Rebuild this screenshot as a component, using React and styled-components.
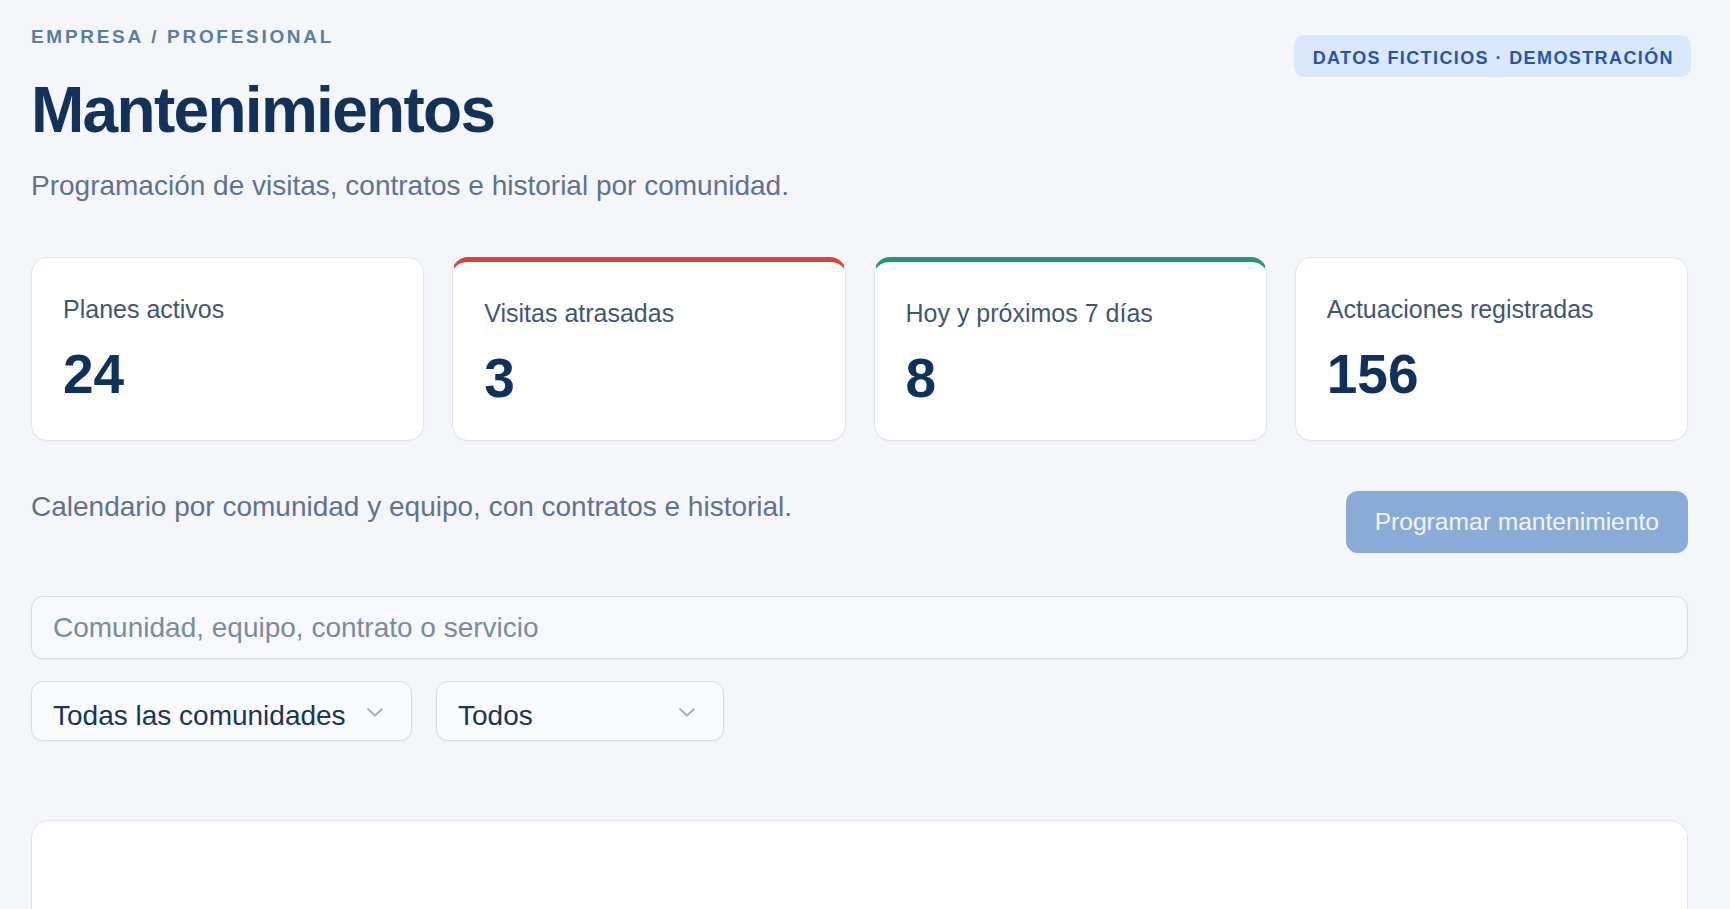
import React from "react";
import styled, { createGlobalStyle } from "styled-components";

const Global = createGlobalStyle`
  * { box-sizing: border-box; }
  html, body {
    margin: 0;
    padding: 0;
    height: 100%;
    overflow: hidden;
    background: #f4f6fa;
    font-family: "Liberation Sans", Arial, Helvetica, sans-serif;
  }
`;

const Page = styled.div`
  height: 100vh;
  overflow: hidden;
  padding: 26px 42px 0 31px;
`;

const Header = styled.header`
  display: flex;
  justify-content: space-between;
  align-items: flex-start;
`;

const Crumb = styled.div`
  font-size: 19px;
  line-height: 22px;
  font-weight: 700;
  letter-spacing: 2.7px;
  color: #5b7ea4;
  text-transform: uppercase;
`;

const Title = styled.h1`
  margin: 26px 0 0;
  font-size: 64px;
  line-height: 72px;
  font-weight: 700;
  letter-spacing: -1.7px;
  color: #12325a;
`;

const Lead = styled.p`
  margin: 22px 0 0;
  font-size: 28px;
  line-height: 36px;
  color: #5f7391;
`;

const Badge = styled.span`
  margin-top: 9px;
  margin-right: -3px;
  padding: 12px 17px 8px 19px;
  border-radius: 10px;
  background: #d9e8fb;
  color: #1f56b5;
  font-size: 18px;
  line-height: 22px;
  font-weight: 700;
  letter-spacing: 1.4px;
  white-space: nowrap;
`;

const Stats = styled.section`
  margin-top: 53px;
  display: grid;
  grid-template-columns: repeat(4, 1fr);
  gap: 28px;
`;

const Card = styled.div`
  background: #ffffff;
  border: 1px solid #dfe5ee;
  border-top: ${(p) => (p.$accent ? `5px solid ${p.$accent}` : "1px solid #dfe5ee")};
  border-radius: 16px;
  padding: 36px 31px ${(p) => (p.$accent ? "32px" : "36px")};
  box-shadow: 0 1px 2px rgba(20, 40, 80, 0.03);
`;

const Label = styled.div`
  font-size: 25px;
  line-height: 30px;
  color: #3f5674;
`;

const Value = styled.div`
  margin-top: 20px;
  font-size: 55px;
  line-height: 60px;
  font-weight: 700;
  color: #10325a;
`;

const Toolbar = styled.div`
  margin-top: 48px;
  display: flex;
  justify-content: space-between;
  align-items: flex-start;
`;

const Hint = styled.p`
  margin: 0;
  font-size: 28px;
  line-height: 36px;
  color: #5f7391;
`;

const Primary = styled.button`
  height: 62px;
  margin-top: 2px;
  padding: 0 29px;
  border: none;
  border-radius: 12px;
  background: #8aabd8;
  color: #f3f6fb;
  font-family: inherit;
  font-size: 24.6px;
  cursor: not-allowed;
`;

const Search = styled.input`
  display: block;
  margin-top: 43px;
  width: 100%;
  height: 63px;
  padding: 0 21px;
  border: 1.5px solid #d3dbe6;
  border-radius: 12px;
  background: #f6f8fb;
  font-family: inherit;
  font-size: 28px;
  color: #1b355b;
  box-shadow: 0 1px 2px rgba(20, 40, 80, 0.06);
  outline: none;
  &::placeholder { color: #7b8ba1; }
`;

const Filters = styled.div`
  margin-top: 22px;
  display: flex;
  gap: 24px;
`;

const SelectWrap = styled.div`
  position: relative;
  width: ${(p) => p.$w}px;
`;

const Select = styled.select`
  appearance: none;
  width: 100%;
  height: 60px;
  padding: 9px 60px 0 21px;
  border: 1.5px solid #d3dbe6;
  border-radius: 12px;
  background: #fafbfd;
  font-family: inherit;
  font-size: 28px;
  color: #1b355b;
  box-shadow: 0 1px 2px rgba(20, 40, 80, 0.06);
  outline: none;
`;

const Chevron = styled.svg`
  position: absolute;
  right: 29px;
  top: 27px;
  pointer-events: none;
`;

const Panel = styled.section`
  margin-top: 79px;
  height: 400px;
  background: #ffffff;
  border: 1px solid #dfe5ee;
  border-radius: 18px;
`;

function Dropdown({ width, options }) {
  return (
    <SelectWrap $w={width}>
      <Select defaultValue={options[0]}>
        {options.map((o) => (
          <option key={o}>{o}</option>
        ))}
      </Select>
      <Chevron width="16" height="9" viewBox="0 0 16 9" fill="none">
        <path d="M1 1l7 6.5L15 1" stroke="#a3aebe" strokeWidth="1.8" strokeLinecap="round" strokeLinejoin="round" />
      </Chevron>
    </SelectWrap>
  );
}

const stats = [
  { label: "Planes activos", value: "24" },
  { label: "Visitas atrasadas", value: "3", accent: "#d8443d" },
  { label: "Hoy y próximos 7 días", value: "8", accent: "#1f977c" },
  { label: "Actuaciones registradas", value: "156" },
];

export default function App() {
  return (
    <>
      <Global />
      <Page>
        <Header>
          <div>
            <Crumb>Empresa / Profesional</Crumb>
            <Title>Mantenimientos</Title>
            <Lead>Programación de visitas, contratos e historial por comunidad.</Lead>
          </div>
          <Badge>DATOS FICTICIOS · DEMOSTRACIÓN</Badge>
        </Header>

        <Stats>
          {stats.map((s) => (
            <Card key={s.label} $accent={s.accent}>
              <Label>{s.label}</Label>
              <Value>{s.value}</Value>
            </Card>
          ))}
        </Stats>

        <Toolbar>
          <Hint>Calendario por comunidad y equipo, con contratos e historial.</Hint>
          <Primary disabled>Programar mantenimiento</Primary>
        </Toolbar>

        <Search placeholder="Comunidad, equipo, contrato o servicio" />

        <Filters>
          <Dropdown width={381} options={["Todas las comunidades", "Residencial Los Olivos", "Edificio Mirador"]} />
          <Dropdown width={288} options={["Todos", "Ascensores", "Climatización", "Piscina"]} />
        </Filters>

        <Panel />
      </Page>
    </>
  );
}
